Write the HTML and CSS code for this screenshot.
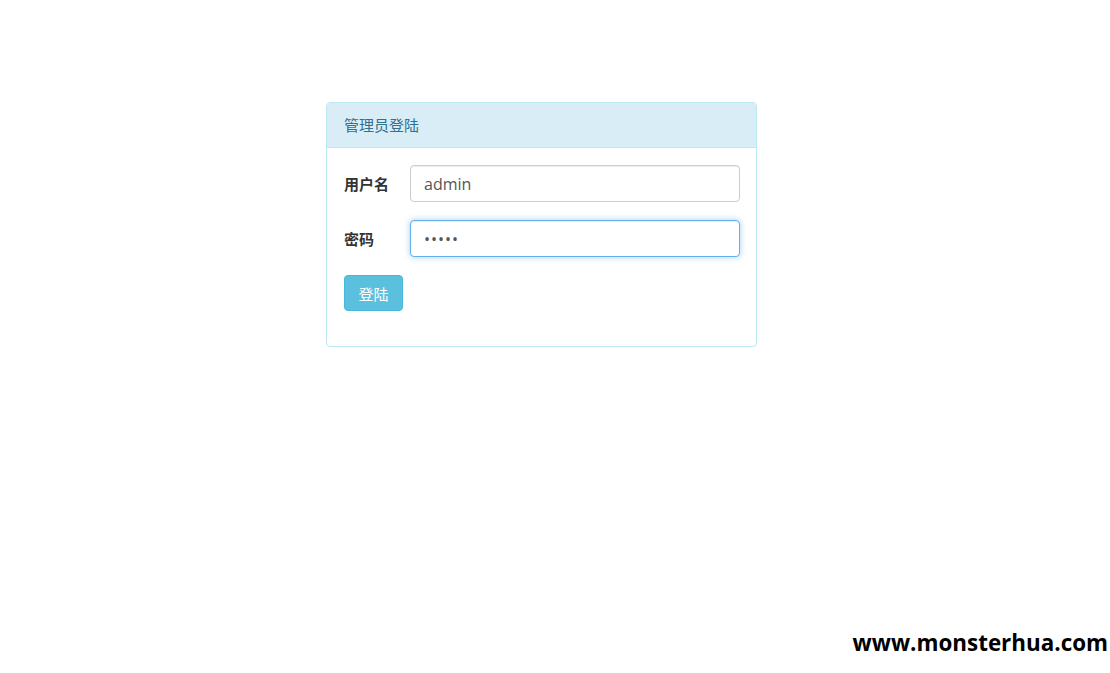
FILE: index.html
```html
<!DOCTYPE html>
<html lang="zh-CN">
<head>
    <meta charset="UTF-8">
    <meta name="viewport" content="width=device-width, initial-scale=1.0">
    <title>管理员登陆</title>
    <link rel="stylesheet" href="styles.css">
</head>
<body>

    <div class="page">
        <!-- 登陆面板 -->
        <div class="panel">
            <div class="panel-heading">管理员登陆</div>
            <div class="panel-body">
                <div class="form-row">
                    <label for="username">用户名</label>
                    <input type="text" id="username" value="admin">
                </div>
                <div class="form-row">
                    <label for="password">密码</label>
                    <input type="password" id="password" class="focused" value="12345">
                </div>
                <button class="btn-login">登陆</button>
            </div>
        </div>
    </div>

    <div class="watermark">www.monsterhua.com</div>

</body>
</html>
```

FILE: styles.css
```css
/* Estilos generales */
body {
    font-family: "Open Sans", "Noto Sans CJK SC", sans-serif;
    background-color: #fff;
    margin: 0;
    padding: 0;
    color: #333;
    font-size: 15px;
}

.page {
    padding: 102px 0 0 326px;
}

/* Panel */
.panel {
    width: 431px;
    border: 1px solid #bce8f1;
    border-radius: 4px;
    box-sizing: border-box;
}

.panel-heading {
    background-color: #d9edf7;
    color: #31708f;
    border-bottom: 1px solid #bce8f1;
    border-radius: 3px 3px 0 0;
    height: 44px;
    line-height: 44px;
    padding: 0 17px;
    font-family: "Noto Sans CJK SC", sans-serif;
    font-size: 15px;
}

.panel-body {
    padding: 17px 16px 35px 17px;
}

.form-row {
    display: flex;
    align-items: center;
    margin-bottom: 18px;
}

.form-row label {
    width: 66px;
    flex-shrink: 0;
    font-family: "Noto Sans CJK SC", sans-serif;
    font-weight: 700;
    font-size: 15px;
    color: #333;
}

.form-row input {
    flex: 1;
    height: 37px;
    box-sizing: border-box;
    border: 1px solid #ccc;
    border-radius: 4px;
    padding: 0 13px;
    font-family: "Open Sans", sans-serif;
    font-size: 16px;
    color: #555;
    box-shadow: inset 0 1px 1px rgba(0, 0, 0, 0.075);
    outline: none;
}

.form-row input.focused {
    border-color: #66afe9;
    box-shadow: inset 0 1px 1px rgba(0, 0, 0, 0.075), 0 0 6px rgba(102, 175, 233, 0.6);
    letter-spacing: 1px;
}

.btn-login {
    display: block;
    width: 59px;
    height: 36px;
    background-color: #5bc0de;
    border: 1px solid #46b8da;
    border-radius: 4px;
    color: #fff;
    font-family: "Noto Sans CJK SC", sans-serif;
    font-size: 15px;
    padding: 0;
    cursor: pointer;
}

/* Marca de agua */
.watermark {
    position: absolute;
    right: 2px;
    top: 627px;
    padding: 0 0 0 6px;
    background-color: #fff;
    font-family: "Open Sans", sans-serif;
    font-weight: 700;
    font-size: 22.4px;
    color: #000;
}
```
